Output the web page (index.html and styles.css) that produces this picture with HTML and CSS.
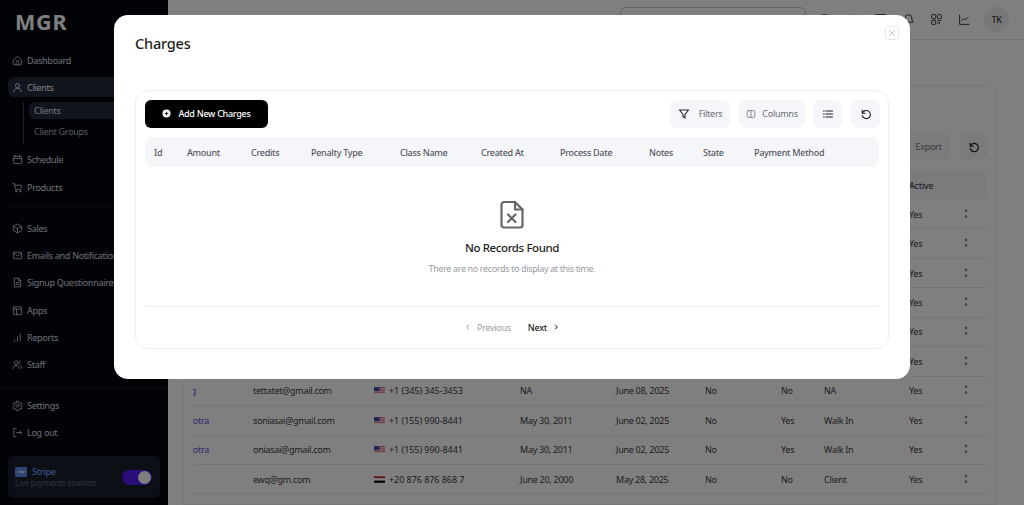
FILE: index.html
```html
<!DOCTYPE html>
<html lang="en">
<head>
<meta charset="utf-8">
<title>Charges</title>
<link rel="stylesheet" href="styles.css">
</head>
<body>
<svg class="defs" width="0" height="0" aria-hidden="true">
  <symbol id="i-refresh" viewBox="0 0 24 24"><path d="M4.500 4.500v6h6"/><path d="M4.800 10.500A8.200 8.200 0 1 1 4.600 15"/></symbol>
  <symbol id="i-dots" viewBox="0 0 6 18"><circle cx="3" cy="4" r="1.800"/><circle cx="3" cy="12" r="1.800"/></symbol>
  <symbol id="i-us" viewBox="0 0 20 12"><rect width="20" height="12" fill="#d8525f"/><rect y="2" width="20" height="2" fill="#fff"/><rect y="6" width="20" height="2" fill="#fff"/><rect y="10" width="20" height="2" fill="#fff"/><rect width="10" height="7" fill="#3b4ea8"/></symbol>
  <symbol id="i-eg" viewBox="0 0 20 12"><rect width="20" height="4" fill="#d02b2b"/><rect y="4" width="20" height="4" fill="#fff"/><rect y="8" width="20" height="4" fill="#000"/></symbol>
</svg>
<div class="app">
  <aside class="sidebar">
    <div class="logo">MGR</div>
    <nav class="nav nav-top">
      <a class="item"><svg class="ico" viewBox="0 0 24 24"><path d="M3 11l9-8 9 8v9a1.500 1.500 0 0 1-1.500 1.500h-15A1.500 1.500 0 0 1 3 20z"/><path d="M9 21v-6a3 3 0 0 1 6 0v6"/></svg>Dashboard</a>
      <a class="item active"><svg class="ico" viewBox="0 0 24 24"><circle cx="12" cy="8" r="4.500"/><path d="M4 21c0-4.500 3.500-7 8-7s8 2.500 8 7"/></svg>Clients</a>
      <div class="sub">
        <a class="sub-item current">Clients</a>
        <a class="sub-item">Client Groups</a>
      </div>
      <a class="item"><svg class="ico" viewBox="0 0 24 24"><rect x="3" y="5" width="18" height="16" rx="2"/><path d="M3 10h18M8 2.500V7M16 2.500V7"/></svg>Schedule</a>
      <a class="item"><svg class="ico" viewBox="0 0 24 24"><path d="M2 3h3l3 13h11l2-9H6"/><circle cx="9" cy="20" r="1.500"/><circle cx="18" cy="20" r="1.500"/></svg>Products</a>
    </nav>
    <div class="rule rule-inset"></div>
    <nav class="nav nav-mid">
      <a class="item"><svg class="ico" viewBox="0 0 24 24"><path d="M12 2.500l9 5v9l-9 5-9-5v-9z"/><path d="M3 7.500l9 5 9-5M12 12.500v9"/></svg>Sales</a>
      <a class="item"><svg class="ico" viewBox="0 0 24 24"><rect x="3" y="5" width="18" height="14" rx="2"/><path d="M3 7l9 6 9-6"/></svg>Emails and Notifications</a>
      <a class="item"><svg class="ico" viewBox="0 0 24 24"><path d="M6 2.500h8l5 5V21.500H6z"/><path d="M14 2.500v5h5M9 12h7M9 16h7"/></svg>Signup Questionnaires</a>
      <a class="item"><svg class="ico" viewBox="0 0 24 24"><rect x="3" y="4" width="18" height="17" rx="1.500"/><path d="M3 9h18M10 9v12"/></svg>Apps</a>
      <a class="item"><svg class="ico" viewBox="0 0 24 24"><path d="M6 20v-3M12 20v-9M18 20V4"/></svg>Reports</a>
      <a class="item"><svg class="ico" viewBox="0 0 24 24"><circle cx="9" cy="8" r="4"/><path d="M2 21c0-4 3-7 7-7s7 3 7 7M16 4.500a4 4 0 0 1 0 7M18 14.500c2.500.700 4 3 4 6"/></svg>Staff</a>
    </nav>
    <div class="rule"></div>
    <nav class="nav nav-bottom">
      <a class="item"><svg class="ico" viewBox="0 0 24 24"><circle cx="12" cy="12" r="3.500"/><path d="M10 2.500h4l.6 3 2.600 1.500 2.900-1 2 3.500-2.300 2v3l2.300 2-2 3.500-2.900-1-2.600 1.500-.6 3h-4l-.6-3-2.600-1.500-2.900 1-2-3.500 2.300-2v-3L1.900 9.500l2-3.500 2.900 1 2.600-1.500z"/></svg>Settings</a>
      <a class="item"><svg class="ico" viewBox="0 0 24 24"><path d="M9 3H4v18h5M10 12h11M17 8l4 4-4 4"/></svg>Log out</a>
    </nav>
    <div class="stripe">
      <div class="stripe-text">
        <div class="stripe-name"><span class="stripe-logo">stripe</span>Stripe</div>
        <div class="stripe-note">Live payments enabled</div>
      </div>
      <div class="toggle"><span class="knob"></span></div>
    </div>
  </aside>

  <main class="main">
    <header class="topbar">
      <div class="search"></div>
      <svg class="top-ico" viewBox="0 0 24 24"><circle cx="12" cy="12" r="9"/></svg>
      <svg class="top-ico" viewBox="0 0 24 24"><path d="M5 3v18M19 3v18"/></svg>
      <svg class="top-ico" viewBox="0 0 24 24"><path d="M3 3h18v18H3z"/></svg>
      <svg class="top-ico" viewBox="0 0 24 24"><path d="M6 9a6 6 0 0 1 12 0c0 6 2.500 7 2.500 8h-17c0-1 2.500-2 2.500-8zM10 20.500h4"/></svg>
      <svg class="top-ico" viewBox="0 0 24 24"><rect x="3" y="3" width="7.500" height="7.500" rx="1.500"/><rect x="13.500" y="3" width="7.500" height="7.500" rx="1.500"/><rect x="3" y="13.500" width="7.500" height="7.500" rx="1.500"/><path d="M13.500 14h7.500M13.500 18h4v3"/></svg>
      <svg class="top-ico" viewBox="0 0 24 24"><path d="M3 3v18h18"/><path d="M6.500 15l4-5 3 3 6-6"/></svg>
      <div class="avatar">TK</div>
    </header>
    <section class="card">
      <div class="card-tools">
        <button class="soft-btn">Export</button>
        <button class="soft-btn square"><svg class="btn-ico"><use href="#i-refresh"/></svg></button>
      </div>
      <div class="bg-head">
        <span></span><span>Email</span><span>Phone</span><span>Date of Birth</span><span>Joined</span><span>Member</span><span>Lead</span><span>Source</span><span>Active</span><span></span>
      </div>
      <div class="bg-row"><span class="nm"></span><span></span><span></span><span></span><span></span><span></span><span></span><span></span><span>Yes</span><svg class="dots"><use href="#i-dots"/></svg></div>
      <div class="bg-row"><span class="nm"></span><span></span><span></span><span></span><span></span><span></span><span></span><span></span><span>Yes</span><svg class="dots"><use href="#i-dots"/></svg></div>
      <div class="bg-row"><span class="nm"></span><span></span><span></span><span></span><span></span><span></span><span></span><span></span><span>Yes</span><svg class="dots"><use href="#i-dots"/></svg></div>
      <div class="bg-row"><span class="nm"></span><span></span><span></span><span></span><span></span><span></span><span></span><span></span><span>Yes</span><svg class="dots"><use href="#i-dots"/></svg></div>
      <div class="bg-row"><span class="nm"></span><span></span><span></span><span></span><span></span><span></span><span></span><span></span><span>Yes</span><svg class="dots"><use href="#i-dots"/></svg></div>
      <div class="bg-row"><span class="nm"></span><span></span><span></span><span></span><span></span><span></span><span></span><span></span><span>Yes</span><svg class="dots"><use href="#i-dots"/></svg></div>
      <div class="bg-row"><span class="nm clip-far">Tet Tag</span><span>tettatet@gmail.com</span><span class="ph"><svg class="flag"><use href="#i-us"/></svg>+1 (345) 345-3453</span><span>NA</span><span>June 08, 2025</span><span>No</span><span>No</span><span>NA</span><span>Yes</span><svg class="dots"><use href="#i-dots"/></svg></div>
      <div class="bg-row"><span class="nm">Malhotra</span><span>soniasai@gmail.com</span><span class="ph"><svg class="flag"><use href="#i-us"/></svg>+1 (155) 990-8441</span><span>May 30, 2011</span><span>June 02, 2025</span><span>No</span><span>Yes</span><span>Walk In</span><span>Yes</span><svg class="dots"><use href="#i-dots"/></svg></div>
      <div class="bg-row"><span class="nm">Malhotra</span><span>oniasai@gmail.com</span><span class="ph"><svg class="flag"><use href="#i-us"/></svg>+1 (155) 990-8441</span><span>May 30, 2011</span><span>June 02, 2025</span><span>No</span><span>Yes</span><span>Walk In</span><span>Yes</span><svg class="dots"><use href="#i-dots"/></svg></div>
      <div class="bg-row"><span class="nm"></span><span>ewq@gm.com</span><span class="ph"><svg class="flag"><use href="#i-eg"/></svg>+20 876 876 868 7</span><span>June 20, 2000</span><span>May 28, 2025</span><span>No</span><span>No</span><span>Client</span><span>Yes</span><svg class="dots"><use href="#i-dots"/></svg></div>
    </section>
  </main>
</div>

<div class="overlay">
  <div class="modal">
    <div class="modal-head">
      <h2 class="modal-title">Charges</h2>
      <button class="close" aria-label="Close"><svg viewBox="0 0 12 12"><path d="M3 3l6 6M9 3l-6 6"/></svg></button>
    </div>
    <div class="panel">
      <div class="toolbar">
        <button class="add-btn"><svg class="plus" viewBox="0 0 20 20"><circle cx="10" cy="10" r="9" fill="#fff"/><path d="M10 6v8M6 10h8" stroke="#000" stroke-width="2"/></svg>Add New Charges</button>
        <div class="tools">
          <button class="tool tool-filter"><svg class="tool-ico dark" viewBox="0 0 24 24"><path d="M3 4h18l-7 9v7l-4-3v-4z"/></svg>Filters</button>
          <button class="tool tool-columns"><svg class="tool-ico small" viewBox="0 0 24 24"><rect x="3" y="4" width="18" height="16" rx="2"/><path d="M12 4v16"/></svg>Columns</button>
          <button class="tool tool-sq"><svg class="tool-ico dark" viewBox="0 0 24 24"><path d="M8 6h13M8 12h13M8 18h13"/><path d="M3 6h1.500M3 12h1.500M3 18h1.500"/></svg></button>
          <button class="tool tool-sq"><svg class="tool-ico dark refresh"><use href="#i-refresh"/></svg></button>
        </div>
      </div>
      <div class="thead">
        <span>Id</span><span>Amount</span><span>Credits</span><span>Penalty Type</span><span>Class Name</span><span>Created At</span><span>Process Date</span><span>Notes</span><span>State</span><span>Payment Method</span>
      </div>
      <div class="empty">
        <svg class="empty-ico" viewBox="0 0 24 28"><path d="M4 1.500h11l7.500 7.500v15.500a2.500 2.500 0 0 1-2.500 2.500H4a2.500 2.500 0 0 1-2.500-2.500v-20.500A2.500 2.500 0 0 1 4 1.500z"/><path d="M15 1.500V9h7.500"/><path d="M8 14l7.500 7.500M15.500 14L8 21.500"/></svg>
        <h3 class="empty-title">No Records Found</h3>
        <p class="empty-text">There are no records to display at this time.</p>
      </div>
      <div class="pager">
        <button class="page-btn off"><svg class="chev" viewBox="0 0 12 12"><path d="M7.500 2.500L4 6l3.500 3.500"/></svg>Previous</button>
        <button class="page-btn"><span>Next</span><svg class="chev" viewBox="0 0 12 12"><path d="M4.500 2.500L8 6 4.500 9.500"/></svg></button>
      </div>
    </div>
  </div>
</div>
</body>
</html>
```
FILE: styles.css
```css
* { box-sizing: border-box; }
html, body { margin: 0; height: 100%; overflow: hidden; }
body { font-family: "Noto Sans", "DejaVu Sans", sans-serif; font-size: 9px; letter-spacing: -.28px; color: #3a3a3f; background: #fff; }
button { font: inherit; letter-spacing: inherit; border: 0; background: none; padding: 0; }
.defs { position: absolute; }

.app { display: flex; height: 505px; }

/* sidebar */
.sidebar { width: 168px; flex: none; background: #05070f; color: #dcdee6; display: flex; flex-direction: column; overflow: hidden; }
.logo { font-size: 21.500px; font-weight: 700; letter-spacing: .8px; color: #fff; line-height: 28px; padding: 8px 0 0 15px; height: 50px; }
.nav { display: flex; flex-direction: column; padding: 0 8px; }
.item { display: flex; align-items: center; gap: 4px; height: 20px; margin-bottom: 7.330px; padding-left: 4px; border-radius: 6px; white-space: nowrap; }
.item.active { background: #232a3c; width: 200px; color: #fff; }
.ico { width: 11px; height: 11px; flex: none; fill: none; stroke: currentColor; stroke-width: 1.700; stroke-linecap: round; stroke-linejoin: round; }
.sub { margin: -3px 0 6.200px 15px; border-left: 1px solid #3a4050; padding-left: 5px; height: 42px; display: flex; flex-direction: column; gap: 4px; }
.sub-item { height: 17px; line-height: 17px; padding-left: 5px; border-radius: 6px; width: 160px; color: #aeb2bd; }
.sub-item.current { background: #232a3c; color: #e2e4ea; }
.rule { height: 1px; background: #171b27; flex: none; }
.rule-inset { margin: 1px 8px 11.800px; }
.nav-mid { margin-bottom: 5px; }
.nav-bottom { padding-top: 7px; }
.stripe { margin: 6.500px 8px 0; height: 42px; border-radius: 6px; background: #1a1f2e; display: flex; align-items: center; justify-content: space-between; padding: 0 8px 0 7px; }
.stripe-text { display: flex; flex-direction: column; gap: 1px; }
.stripe-name { display: flex; align-items: center; gap: 5px; color: #7aa5ff; font-weight: 500; line-height: 11px; }
.stripe-logo { width: 12px; height: 10px; background: #5f8be8; border-radius: 1px; font-size: 3px; line-height: 10px; text-align: center; color: #fff; }
.stripe-note { color: #5c6172; font-size: 8px; line-height: 10px; }
.toggle { width: 30px; height: 15px; border-radius: 8px; background: #5419f0; display: flex; align-items: center; justify-content: flex-end; padding-right: 1px; }
.knob { width: 13px; height: 13px; border-radius: 50%; background: #fff; }

/* page behind */
.main { flex: 1; min-width: 0; display: flex; flex-direction: column; background: #fff; }
.topbar { height: 40px; flex: none; border-bottom: 1px solid #ececec; display: flex; align-items: center; justify-content: flex-end; gap: 15px; padding-right: 15px; }
.search { width: 186px; height: 26px; border: 1px solid #c9cdd3; border-radius: 6px; margin-right: -3px; }
.top-ico { width: 13px; height: 13px; flex: none; fill: none; stroke: #333; stroke-width: 1.800; stroke-linejoin: round; }
.avatar { width: 25px; height: 25px; border-radius: 50%; background: #f0f1f5; border: 1px solid #eceef2; font-weight: 500; line-height: 23px; text-align: center; margin-left: -2px; }
.card { margin: 45px 27px 0 15px; border: 1px solid #f0f0f2; border-radius: 12px 12px 0 0; padding: 0 9px; flex: 1; overflow: hidden; }
.card-tools { display: flex; justify-content: flex-end; align-items: flex-start; gap: 10px; height: 84px; padding-top: 47px; margin-right: -1px; }
.soft-btn { height: 27px; width: 43px; border-radius: 6px; background: #f5f6fa; color: #777; display: flex; align-items: center; justify-content: center; }
.soft-btn.square { width: 28px; }
.btn-ico { width: 12px; height: 12px; fill: none; stroke: #222; stroke-width: 2.400; stroke-linecap: round; stroke-linejoin: round; }
.bg-head, .bg-row { display: grid; grid-template-columns: 60px 121px 146px 96px 89px 76px 43px 85px 54px 24px; align-items: center; white-space: nowrap; }
.bg-head { height: 30px; background: #f5f6fa; border-radius: 8px; font-weight: 500; color: #4a4a50; }
.bg-row { height: 29.450px; border-bottom: 1px solid #eeeef0; }
.nm { color: #6d3fd1; overflow: hidden; display: flex; justify-content: flex-end; padding-right: 44px; }
.clip-far { padding-right: 57px; }
.ph { display: flex; align-items: center; gap: 4px; letter-spacing: -.05px; }
.flag { width: 11px; height: 7px; flex: none; }
.dots { width: 6px; height: 13px; fill: #888; }

/* modal */
.overlay { position: fixed; inset: 0; background: rgba(0,0,0,.5); display: flex; justify-content: center; align-items: flex-start; padding-top: 15px; }
.modal { width: 796px; height: 364px; background: #fff; border-radius: 14px; padding: 0 21px; }
.modal-head { height: 75px; display: flex; justify-content: space-between; padding-top: 11px; }
.modal-title { margin: 5px 0 0; font-size: 14.500px; font-weight: 500; letter-spacing: -.2px; color: #1e1e22; line-height: 24px; }
.close { width: 14px; height: 14px; margin: 0 -10px 0 0; border: 1px solid #e8e8ea; border-radius: 3px; display: flex; }
.close svg { width: 12px; height: 12px; fill: none; stroke: #c8c8cc; stroke-width: 1; }
.panel { height: 259px; border: 1px solid #f0f0f3; border-radius: 12px; padding: 9px 9px 0; }
.toolbar { display: flex; justify-content: space-between; height: 28px; margin: 0 -1px 9px 0; }
.add-btn { width: 123px; height: 28px; padding-bottom: 1px; background: #000; color: #fff; border-radius: 6px; display: flex; align-items: center; justify-content: center; gap: 7px; font-weight: 500; }
.plus { width: 9px; height: 9px; }
.tools { display: flex; gap: 9px; }
.tool { height: 28px; padding-bottom: 1px; border-radius: 7px; background: #f5f6fa; color: #6b6d75; display: flex; align-items: center; justify-content: center; }
.tool-filter { width: 60px; gap: 9px; }
.tool-columns { width: 66px; gap: 6px; margin-right: -1px; }
.tool-sq { width: 29px; }
.tool-ico { width: 12px; height: 12px; fill: none; stroke: #6b6d75; stroke-width: 1.800; stroke-linecap: round; stroke-linejoin: round; }
.tool-ico.small { width: 10px; height: 10px; }
.tool-ico.dark { stroke: #222; stroke-width: 2.200; }
.thead { height: 30px; background: #f5f6fa; border-radius: 8px; display: grid; grid-template-columns: 33px 64px 60px 89px 81px 79px 89px 54px 51px 1fr; align-items: center; padding-left: 9px; color: #55575f; font-weight: 500; white-space: nowrap; }
.empty { height: 140px; border-bottom: 1px solid #f0f0f3; display: flex; flex-direction: column; align-items: center; padding-top: 33px; }
.empty-ico { width: 24px; height: 29px; fill: none; stroke: #666; stroke-width: 2.200; stroke-linejoin: round; stroke-linecap: round; }
.empty-title { margin: 10px 0 0; font-size: 11.500px; font-weight: 500; letter-spacing: -.4px; color: #1e1e22; line-height: 17px; }
.empty-text { margin: 6px 0 0; letter-spacing: -.36px; color: #9a9ca3; line-height: 13px; }
.pager { display: flex; justify-content: center; align-items: center; gap: 17px; height: 40px; }
.page-btn { display: flex; align-items: center; gap: 5px; color: #1e1e22; font-weight: 500; }
.page-btn.off { color: #9a9ca3; font-weight: 400; }
.chev { width: 8px; height: 8px; fill: none; stroke: currentColor; stroke-width: 1.500; }
```
